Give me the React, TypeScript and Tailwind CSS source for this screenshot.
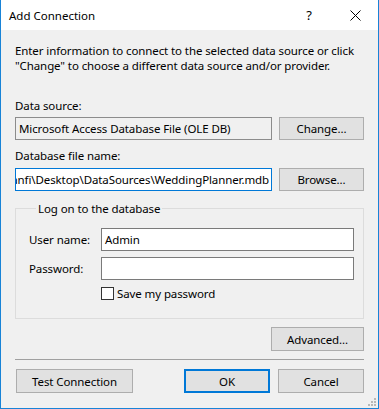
const font = { fontFamily: '"Noto Sans", "Segoe UI", sans-serif' };

const Button = ({
  label,
  width,
  height = "h-[24px]",
  isDefault,
}: {
  label: string;
  width: string;
  height?: string;
  isDefault?: boolean;
}) => {
  return (
    <button
      className={
        isDefault
          ? `${width} ${height} border-2 border-[#0078d7] bg-[#e1e1e1] text-black`
          : `${width} ${height} border border-[#adadad] bg-[#e1e1e1] text-black`
      }
    >
      {label}
    </button>
  );
};

export default function App() {
  return (
    <div
      className="w-[379px] h-[409px] flex flex-col border border-t-0 border-[#1883d7] bg-[#f0f0f0] text-[11.5px] tracking-[-0.1px] leading-[15px] text-black relative overflow-hidden"
      style={font}
    >
      {/* title bar */}
      <div className="h-[30px] bg-white flex items-center pl-[8px] shrink-0 text-[11.5px] tracking-normal">
        <span className="flex-1">Add Connection</span>
        <span className="w-[46px] text-center text-[13px]">?</span>
        <span className="w-[46px] flex justify-center">
          <svg width="11" height="11" viewBox="0 0 11 11">
            <path d="M0.5 0.5 L10.5 10.5 M10.5 0.5 L0.5 10.5" stroke="#000" strokeWidth="1" />
          </svg>
        </span>
      </div>

      <div className="flex flex-col px-[14px] pt-[13px]">
        <p className="whitespace-nowrap">
          Enter information to connect to the selected data source or click
          <br />
          "Change" to choose a different data source and/or provider.
        </p>

        <div className="mt-[25px]">Data source:</div>
        <div className="mt-[4px] flex gap-[7px] items-start">
          <div className="w-[257px] h-[23px] border border-[#8c8c8c] bg-[#f0f0f0] flex items-center px-[3px] whitespace-nowrap overflow-hidden">
            Microsoft Access Database File (OLE DB)
          </div>
          <Button label="Change..." width="w-[85px]" height="h-[23px]" />
        </div>

        <div className="mt-[8px]">Database file name:</div>
        <div className="mt-[5px] flex gap-[7px] items-start">
          <div className="w-[257px] h-[23px] border border-[#0078d7] bg-white flex items-center justify-end px-[2px] whitespace-nowrap overflow-hidden">
            <span className="shrink-0">C:\Users\hanfi\Desktop\DataSources\WeddingPlanner.mdb</span>
          </div>
          <Button label="Browse..." width="w-[85px]" height="h-[23px]" />
        </div>

        <fieldset className="mt-[10px] border border-[#dcdcdc] pl-[13px] pr-[9px] pb-[17px]">
          <legend className="ml-[7px] px-[2px]">Log on to the database</legend>
          <div className="mt-[12px] flex items-center">
            <span className="w-[72px]">User name:</span>
            <div className="flex-1 h-[23px] border border-[#7a7a7a] bg-white flex items-center px-[3px]">
              Admin
            </div>
          </div>
          <div className="mt-[6px] flex items-center">
            <span className="w-[72px]">Password:</span>
            <div className="flex-1 h-[23px] border border-[#7a7a7a] bg-white" />
          </div>
          <div className="mt-[6px] ml-[72px] flex items-center gap-[3px]">
            <div className="w-[13px] h-[13px] border border-[#333333] bg-white" />
            <span>Save my password</span>
          </div>
        </fieldset>

        <div className="mt-[8px] flex justify-end">
          <Button label="Advanced..." width="w-[93px]" />
        </div>

        <div className="mt-[8px] h-px bg-[#a0a0a0]" />

        <div className="mt-[9px] flex items-start">
          <div className="pl-[1px]">
            <Button label="Test Connection" width="w-[117px]" />
          </div>
          <div className="flex-1" />
          <Button label="OK" width="w-[86px]" isDefault />
          <div className="w-[8px]" />
          <Button label="Cancel" width="w-[86px]" />
        </div>
      </div>

      <svg className="absolute right-[2px] bottom-[2px]" width="8" height="8" viewBox="0 0 8 8">
        <rect x="6" y="0" width="2" height="2" fill="#b8b8b8" />
        <rect x="3" y="3" width="2" height="2" fill="#b8b8b8" />
        <rect x="6" y="3" width="2" height="2" fill="#b8b8b8" />
        <rect x="0" y="6" width="2" height="2" fill="#b8b8b8" />
        <rect x="3" y="6" width="2" height="2" fill="#b8b8b8" />
        <rect x="6" y="6" width="2" height="2" fill="#b8b8b8" />
      </svg>
    </div>
  );
}
